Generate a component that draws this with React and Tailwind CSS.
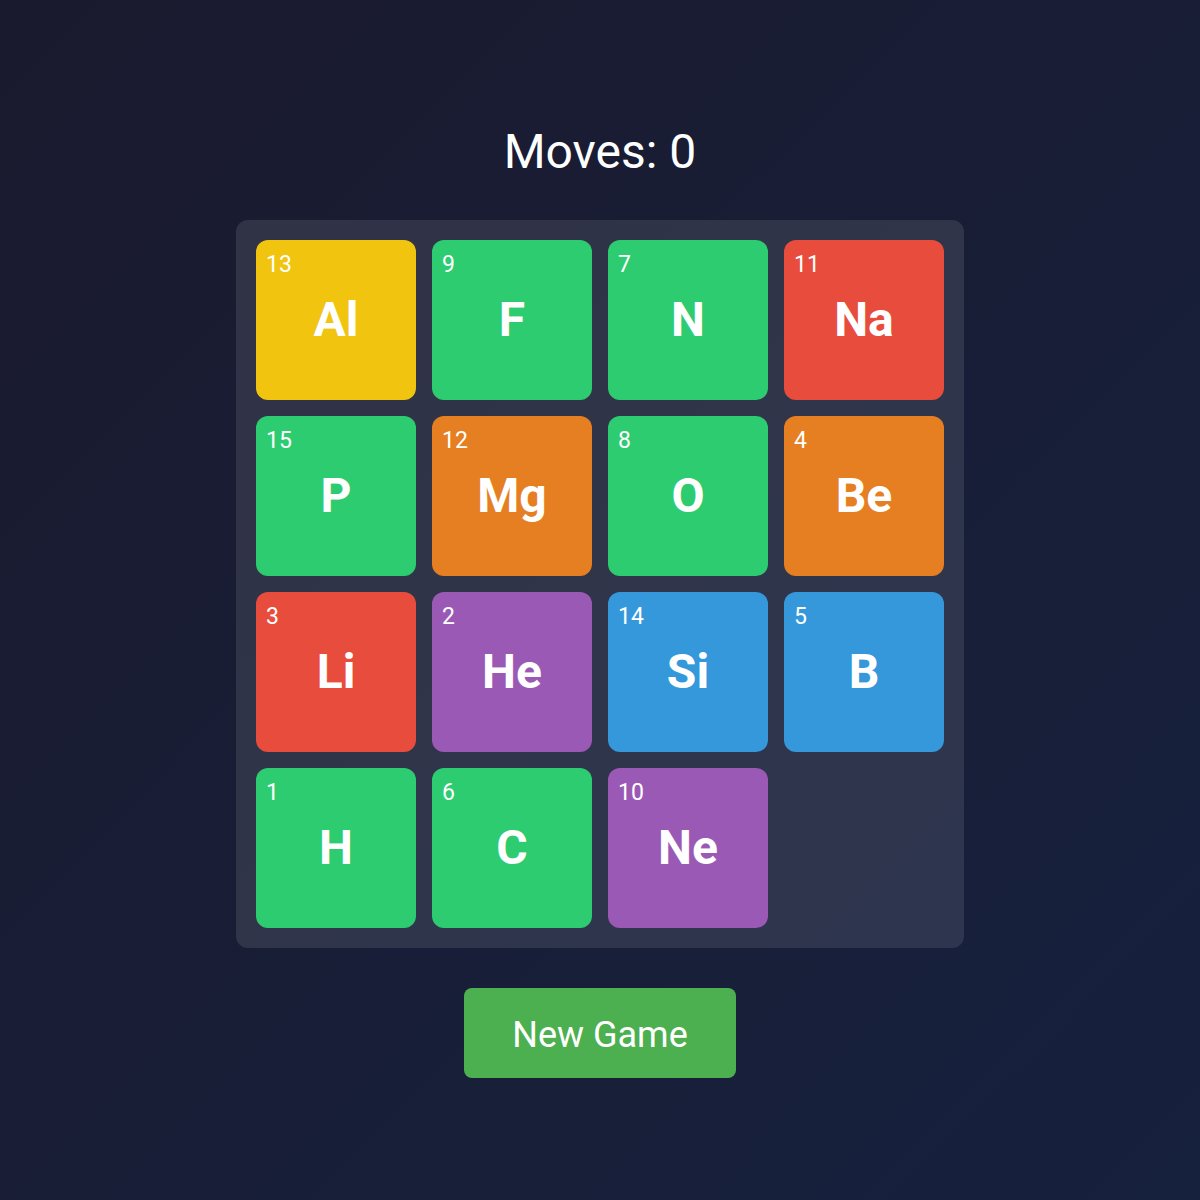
import React from "react";

const COLORS = {
  yellow: "bg-[#f1c40f]",
  green: "bg-[#2ecc71]",
  red: "bg-[#e74c3c]",
  orange: "bg-[#e67e22]",
  purple: "bg-[#9b59b6]",
  blue: "bg-[#3498db]",
};

const tiles = [
  { n: 13, s: "Al", c: "yellow" },
  { n: 9, s: "F", c: "green" },
  { n: 7, s: "N", c: "green" },
  { n: 11, s: "Na", c: "red" },
  { n: 15, s: "P", c: "green" },
  { n: 12, s: "Mg", c: "orange" },
  { n: 8, s: "O", c: "green" },
  { n: 4, s: "Be", c: "orange" },
  { n: 3, s: "Li", c: "red" },
  { n: 2, s: "He", c: "purple" },
  { n: 14, s: "Si", c: "blue" },
  { n: 5, s: "B", c: "blue" },
  { n: 1, s: "H", c: "green" },
  { n: 6, s: "C", c: "green" },
  { n: 10, s: "Ne", c: "purple" },
  null,
];

function Tile({ tile }) {
  if (!tile) return <div className="w-[160px] h-[160px]" />;
  return (
    <div
      className={`relative w-[160px] h-[160px] rounded-[12px] ${COLORS[tile.c]} flex items-center justify-center text-white`}
    >
      <span className="absolute top-[8px] left-[10px] text-[23px] leading-normal">
        {tile.n}
      </span>
      <span className="text-[48px] font-bold leading-[56px]">{tile.s}</span>
    </div>
  );
}

export default function App() {
  return (
    <div
      className="min-h-screen w-full flex flex-col items-center justify-center bg-gradient-to-br from-[#1a1a2e] to-[#16213e] text-white"
      style={{ fontFamily: "Roboto, 'Noto Sans', sans-serif" }}
    >
      <h1 className="text-[48px] font-normal pt-[4px] leading-[52px] mb-[42px]">Moves: 0</h1>
      <div className="grid grid-cols-4 gap-[16px] p-[20px] rounded-[12px] bg-white/10">
        {tiles.map((t, i) => (
          <Tile key={i} tile={t} />
        ))}
      </div>
      <button className="mt-[40px] w-[272px] h-[90px] pt-[3px] rounded-[8px] bg-[#4caf50] text-white text-[36px] leading-[42px] flex items-center justify-center">
        New Game
      </button>
    </div>
  );
}
